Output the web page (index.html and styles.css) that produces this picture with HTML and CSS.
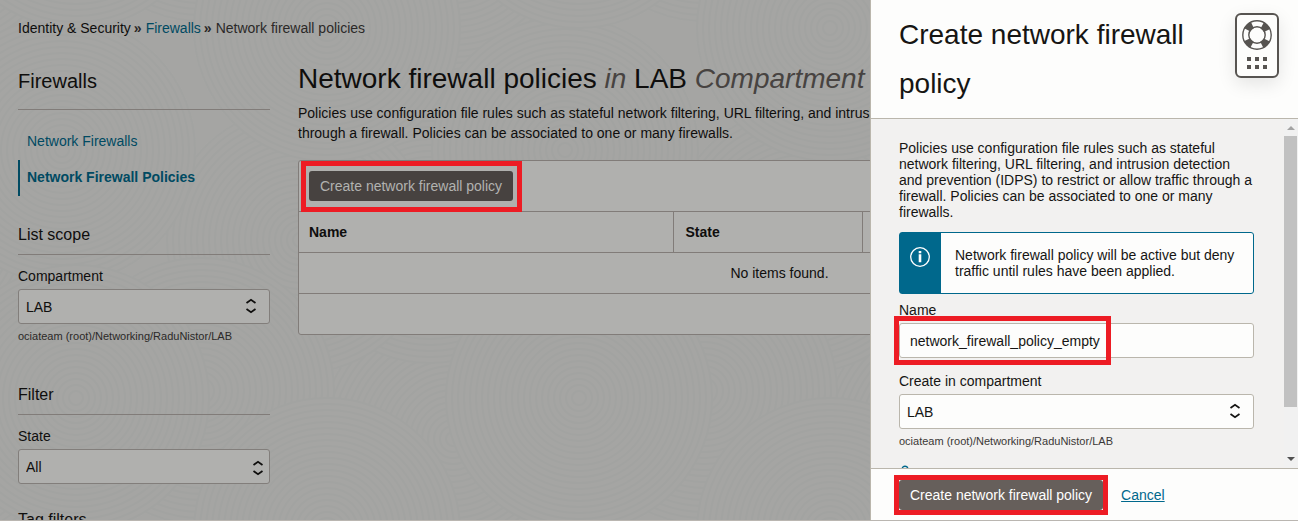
FILE: index.html
```html
<!DOCTYPE html>
<html lang="en">
<head>
<meta charset="utf-8">
<title>Network firewall policies</title>
<link rel="stylesheet" href="styles.css">
</head>
<body>
<svg class="defs" aria-hidden="true">
  <defs>
    <symbol id="updown" viewBox="0 0 12 16">
      <path d="M1.5 5 L6 1.7 L10.5 5 M1.5 11 L6 14.3 L10.5 11" fill="none" stroke="currentColor" stroke-width="1.7"/>
    </symbol>
    <g id="rings">
      <circle r="133"/><circle r="127"/><circle r="121"/><circle r="115"/><circle r="109"/><circle r="103"/><circle r="97"/><circle r="91"/><circle r="85"/><circle r="79"/><circle r="73"/><circle r="67"/><circle r="61"/><circle r="55"/><circle r="49"/><circle r="43"/><circle r="37"/><circle r="31"/><circle r="25"/><circle r="19"/><circle r="13"/><circle r="7"/>
    </g>
    <pattern id="waves" width="503" height="503" patternUnits="userSpaceOnUse">
      <g fill="#a5a5a3" stroke="#a2a3a1" stroke-width="2">
        <use href="#rings" x="453" y="439"/><use href="#rings" x="-50" y="439"/><use href="#rings" x="453" y="-64"/><use href="#rings" x="-50" y="-64"/>
        <use href="#rings" x="430" y="230"/><use href="#rings" x="-73" y="230"/>
        <use href="#rings" x="300" y="240"/>
        <use href="#rings" x="62" y="150"/><use href="#rings" x="565" y="150"/>
        <use href="#rings" x="201" y="391"/><use href="#rings" x="201" y="-112"/>
        <use href="#rings" x="76" y="398"/><use href="#rings" x="579" y="398"/><use href="#rings" x="76" y="-105"/><use href="#rings" x="579" y="-105"/>
        <use href="#rings" x="327" y="28"/><use href="#rings" x="327" y="531"/>
      </g>
    </pattern>
  </defs>
</svg>

<div class="page">
  <svg class="backdrop" aria-hidden="true"><rect width="100%" height="100%" fill="url(#waves)"/></svg>

  <nav class="breadcrumb" aria-label="Breadcrumb">
    <span>Identity &amp; Security</span><b>»</b><a href="#">Firewalls</a><b>»</b><span class="current">Network firewall policies</span>
  </nav>

  <div class="columns">
    <aside class="sidebar">
      <h2 class="side-title">Firewalls</h2>
      <nav class="side-nav" aria-label="Firewalls">
        <a href="#">Network Firewalls</a>
        <a href="#" class="active">Network Firewall Policies</a>
      </nav>

      <section class="scope">
        <h3>List scope</h3>
        <label for="scope">Compartment</label>
        <div class="select">
          <select id="scope"><option>LAB</option></select>
          <svg><use href="#updown"/></svg>
        </div>
        <p class="hint">ociateam (root)/Networking/RaduNistor/LAB</p>
      </section>

      <section class="filter">
        <h3>Filter</h3>
        <label for="state">State</label>
        <div class="select tight">
          <select id="state"><option>All</option></select>
          <svg><use href="#updown"/></svg>
        </div>
      </section>

      <section class="tags"><h3>Tag filters</h3></section>
    </aside>

    <main class="main">
      <h1>Network firewall policies <em>in</em> LAB <em>Compartment</em></h1>
      <p class="intro">Policies use configuration file rules such as stateful network filtering, URL filtering, and intrusion detection and prevention (IDPS) to restrict or allow traffic through a firewall. Policies can be associated to one or many firewalls.</p>
      <div class="card">
        <div class="toolbar">
          <div class="marked marked-wide"><button type="button" class="btn">Create network firewall policy</button></div>
        </div>
        <table>
          <thead><tr><th class="col-name">Name</th><th class="col-state">State</th><th></th></tr></thead>
          <tbody><tr><td colspan="3">No items found.</td></tr></tbody>
        </table>
        <div class="card-foot"></div>
      </div>
    </main>
  </div>
</div>

<form class="drawer" aria-label="Create network firewall policy">
  <header class="drawer-head">
    <h2>Create network firewall policy</h2>
    <button type="button" class="help" aria-label="Help">
      <svg viewBox="0 0 32 50" class="help-icon">
        <circle cx="16" cy="16" r="11" fill="none" stroke="#575451" stroke-width="7" stroke-dasharray="7 10.28" stroke-dashoffset="-5.14"/>
        <circle cx="16" cy="16" r="14.2" fill="none" stroke="#575451" stroke-width="1.4"/>
        <circle cx="16" cy="16" r="8.2" fill="none" stroke="#575451" stroke-width="1.4"/>
        <path d="M6 38h4v4h-4zM14 38h4v4h-4zM22 38h4v4h-4zM6 46h4v4h-4zM14 46h4v4h-4zM22 46h4v4h-4z" fill="#575451"/>
      </svg>
    </button>
  </header>

  <div class="drawer-mid">
    <div class="drawer-body">
      <p>Policies use configuration file rules such as stateful network filtering, URL filtering, and intrusion detection and prevention (IDPS) to restrict or allow traffic through a firewall. Policies can be associated to one or many firewalls.</p>
      <div class="info">
        <div class="info-icon">
          <svg viewBox="0 0 20 20"><circle cx="10" cy="10" r="9.3" fill="none" stroke="#fff" stroke-width="1.3"/><path d="M8.7 4h2.6v2.2h-2.6zM8.7 7.2h2.6v8h-2.6z" fill="#fff"/></svg>
        </div>
        <p>Network firewall policy will be active but deny traffic until rules have been applied.</p>
      </div>
      <label for="name">Name</label>
      <div class="marked marked-name"><input id="name" type="text" value="network_firewall_policy_empty"></div>
      <label for="comp" class="spaced">Create in compartment</label>
      <div class="select">
        <select id="comp"><option>LAB</option></select>
        <svg><use href="#updown"/></svg>
      </div>
      <p class="hint">ociateam (root)/Networking/RaduNistor/LAB</p>
      <svg class="more" viewBox="0 0 12 12"><circle cx="6" cy="4" r="2.8" fill="none" stroke="#00688c" stroke-width="1.4"/></svg>
    </div>
    <div class="scrollbar" aria-hidden="true">
      <svg viewBox="0 0 14 17"><path d="M3 11 L7 7 L11 11z" fill="#a3a3a3"/></svg>
      <div class="track"><div class="thumb"></div></div>
      <svg viewBox="0 0 14 17"><path d="M3 6 L7 10 L11 6z" fill="#505050"/></svg>
    </div>
  </div>

  <footer class="drawer-foot">
    <div class="marked"><button type="submit" class="btn">Create network firewall policy</button></div>
    <a href="#">Cancel</a>
  </footer>
</form>
</body>
</html>
```
FILE: styles.css
```css
*, *::after { box-sizing: border-box; }

body {
  margin: 0;
  height: 100vh;
  overflow: hidden;
  position: relative;
  font: 14px/16px "Liberation Sans", Arial, sans-serif;
  color: #161513;
}

h1, h2, h3, p { margin: 0; font-weight: 400; }
label { display: block; margin-bottom: 5px; }
button, input, select { font: inherit; color: inherit; }
.defs { position: absolute; width: 0; height: 0; }

.page {
  position: relative;
  height: 100%;
  overflow: hidden;
  padding: 20px 37px 0 18px;
  background: #a5a5a3;
  color: #0f0e0d;
  border-bottom: 1px solid #bab6b1;
}
.backdrop { position: absolute; inset: 0; width: 100%; height: 100%; }
.breadcrumb, .columns { position: relative; }
.breadcrumb { display: flex; }
.breadcrumb b { margin: 0 4px 0 3px; color: #2a2827; }
.breadcrumb a { color: #004a62; text-decoration: none; }
.breadcrumb .current { color: #2b2928; }

.columns {
  display: grid;
  grid-template-columns: 252px minmax(0, 1fr);
  gap: 28px;
  padding-top: 24px;
}

.sidebar { padding-top: 9px; }
.side-title {
  font-size: 20px;
  line-height: 24px;
  padding-bottom: 16px;
  border-bottom: 1px solid #817c79;
}
.side-nav { display: flex; flex-direction: column; padding-top: 14px; }
.side-nav a {
  padding-left: 7px;
  border-left: 2px solid transparent;
  line-height: 35px;
  padding-bottom: 1px;
  color: #004a62;
  text-decoration: none;
}
.side-nav .active { border-color: #004a62; font-weight: 700; }

.sidebar h3 {
  font-size: 16px;
  line-height: 20px;
  padding-bottom: 9px;
  margin-bottom: 13px;
  border-bottom: 1px solid #817c79;
}
.scope { padding-top: 29px; }
.filter { padding-top: 41px; }
.tags { padding-top: 26px; }

.select { position: relative; }
.select select {
  appearance: none;
  display: block;
  width: 100%;
  height: 35px;
  padding: 0 7px;
  background: #fdfdfc;
  border: 1px solid #bab6ac;
  border-radius: 3px;
}
.select svg {
  position: absolute;
  top: 9px;
  right: 13px;
  width: 12px;
  height: 16px;
  pointer-events: none;
}
.tight svg { top: 11px; right: 6px; }
.page .select select { background: #b0b0ae; border-color: #827e7b; }
.hint { font-size: 11px; padding-top: 4px; color: #3a3836; }
.page .hint { color: #2b2928; }

h1 { font-size: 28px; line-height: 36px; padding-top: 1px; white-space: nowrap; }
h1 em { color: #474341; }
.intro { line-height: 20px; padding: 6px 0 17px; }

.card {
  background: #b0b0ae;
  border: 1px solid #817c79;
  border-radius: 3px;
}
.toolbar { display: flex; padding: 10px; height: 50px; }
table { width: 100%; border-collapse: collapse; table-layout: fixed; }
th, td { height: 41px; padding: 0 10px 1px; border-top: 1px solid #817c79; }
th { text-align: left; font-weight: 700; }
th + th { border-left: 1px solid #817c79; padding-left: 12px; }
td { text-align: center; border-bottom: 1px solid #817c79; }
.col-name { width: 374px; }
.col-state { width: 189px; }
.card-foot { height: 40px; }

.btn {
  display: block;
  height: 30px;
  padding: 0 11px;
  border: 0;
  border-radius: 3px;
  background: #665f5b;
  color: #fff;
  white-space: nowrap;
}
.page .btn { background: #474240; color: #b2b2b0; }

.marked { position: relative; }
.marked::after {
  content: "";
  position: absolute;
  inset: -5px;
  border: 5px solid #ed1c24;
  pointer-events: none;
}
.marked-wide::after { inset: -10px -9px -11px -8px; }
.marked-name::after { inset: -7px auto -7px -5px; width: 217px; }

.drawer {
  position: absolute;
  top: 0;
  right: 0;
  bottom: 0;
  width: 428px;
  display: flex;
  flex-direction: column;
  background: #fdfdfc;
  border-left: 1px solid #bab6ac;
  border-bottom: 1px solid #bab6b1;
}
.drawer-head {
  display: flex;
  align-items: flex-start;
  justify-content: space-between;
  gap: 20px;
  padding: 10px 19px 10px 28px;
  border-bottom: 1px solid #bab6ac;
}
.drawer-head h2 { font-size: 28px; line-height: 49px; }
.help {
  flex: none;
  width: 44px;
  height: 65px;
  margin-top: 3px;
  padding: 4px;
  display: flex;
  justify-content: center;
  background: #fdfdfc;
  border: 2px solid #575451;
  border-radius: 6px;
  box-shadow: 0 6px 18px rgba(0, 0, 0, 0.1);
}
.help-icon { width: 32px; height: 50px; }

.drawer-mid { flex: 1; min-height: 0; display: flex; background: #f2f1f0; }
.drawer-body { flex: 1; min-width: 0; overflow: hidden; padding: 21px 30px 0 28px; }
.info {
  display: flex;
  margin: 12px 0 8px;
  background: #fdfdfc;
  border: 1px solid #00688c;
  border-radius: 3px;
}
.info-icon { flex: none; width: 41px; padding: 14px 10px; background: #00688c; }
.info-icon svg { display: block; width: 20px; height: 20px; }
.info p { padding: 14px; }
input {
  display: block;
  width: 100%;
  height: 35px;
  padding: 0 10px;
  background: #fdfdfc;
  border: 1px solid #bab6ac;
  border-radius: 3px;
}
.spaced { margin-top: 15px; }
.more { display: block; width: 12px; height: 12px; margin-top: 16px; }

.scrollbar { flex: none; width: 14px; display: flex; flex-direction: column; background: #f1f1f1; }
.scrollbar svg { display: block; width: 14px; height: 17px; }
.track { flex: 1; }
.thumb { width: 13px; height: 86%; background: #c1c1c1; }

.drawer-foot {
  display: flex;
  align-items: center;
  gap: 18px;
  padding: 11px 28px 10px;
  border-top: 1px solid #bab6ac;
}
.drawer-foot a { color: #00688c; }
```
